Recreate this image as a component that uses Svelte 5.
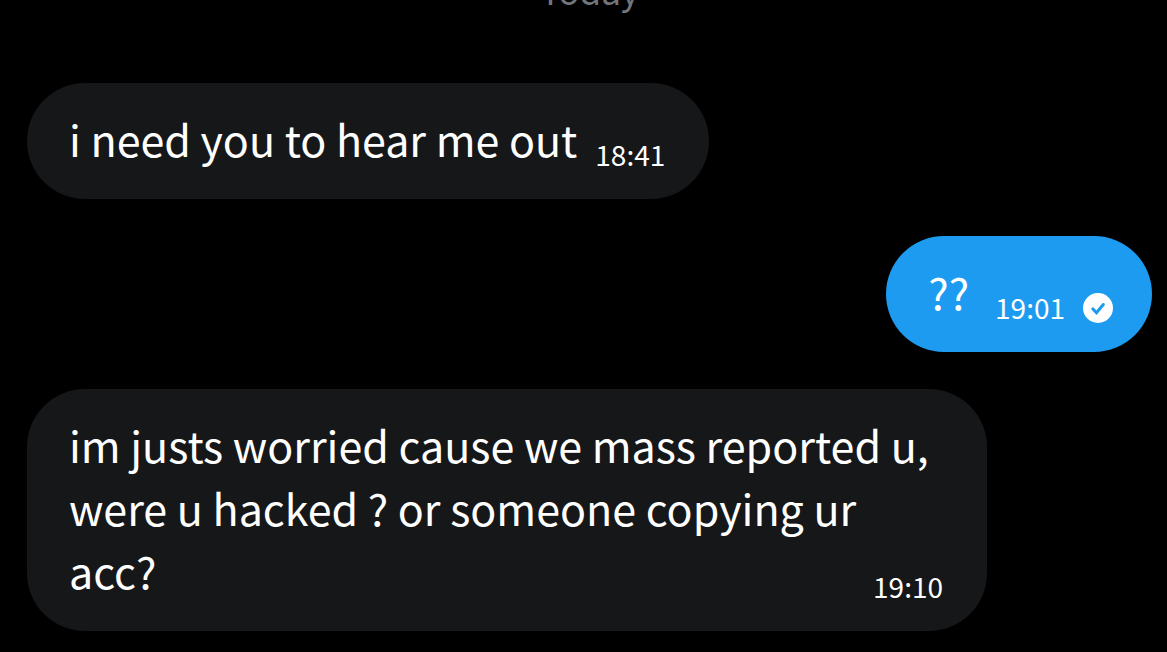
<script lang="ts">
    type Message = { text: string; time: string; mine?: boolean };

    let { day = 'Today' }: { day?: string } = $props();

    const messages: Message[] = [
        { text: 'i need you to hear me out', time: '18:41' },
        { text: '??', time: '19:01', mine: true },
        { text: 'im justs worried cause we mass reported u, were u hacked ? or someone copying ur acc?', time: '19:10' }
    ];
</script>

<main class="chat">
    <div class="day">{day}</div>
    {#each messages as message}
        <div class="bubble" class:mine={message.mine}>
            <span class="text">{message.text}</span>
            <span class="meta">
                <time>{message.time}</time>
                {#if message.mine}
                    <svg class="sent" viewBox="0 0 30 30" role="img" aria-label="Sent">
                        <circle cx="15" cy="15" r="15" fill="#fff" />
                        <path d="M9.8 15.9l3.7 3.8 6.8-8.2" fill="none" stroke="#1d9bf0" stroke-width="3" stroke-linecap="round" />
                    </svg>
                {/if}
            </span>
        </div>
    {/each}
</main>

<style>
    :global(body) {
        background: #000;
        overflow: hidden;
    }
    .chat {
        display: flex;
        flex-direction: column;
        align-items: flex-start;
        gap: 37px;
        padding: 0 15px 0 27px;
        color: #fff;
        font-family: 'Noto Sans CJK JP', sans-serif;
    }
    .day {
        align-self: center;
        margin: -30px 0 36px;
        line-height: 40px;
        font-size: 35px;
        color: #71767b;
    }
    .bubble {
        display: flow-root;
        box-sizing: border-box;
        max-width: 960px;
        padding: 24px 44px 29px 42px;
        border-radius: 58px;
        background: #161719;
        font-size: 43px;
        line-height: 63px;
    }
    .mine {
        align-self: flex-end;
        padding-right: 39px;
        background: #1d9bf0;
    }
    /* sits on the last line of the message, like a trailing word */
    .meta {
        float: right;
        display: flex;
        align-items: center;
        gap: 18px;
        margin: 33px 0 0 18px;
        font-size: 28px;
        line-height: 28px;
    }
    .mine .meta {
        margin-left: 26px;
    }
    time {
        padding-bottom: 2px;
    }
    .sent {
        width: 30px;
        height: 30px;
    }
</style>
